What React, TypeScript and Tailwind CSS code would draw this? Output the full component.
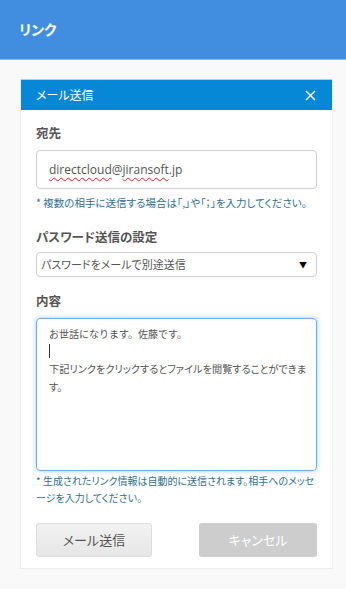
import React from "react";

const jp = "font-['Noto_Sans_CJK_JP','Noto_Sans',sans-serif] [font-feature-settings:'palt']";

export default function App() {
  return (
    <div className={`h-[589px] w-full bg-[#f9f9f9] ${jp}`}>
      <header className="flex h-[60px] items-center border-b border-[#8ebbec] bg-[#418ee0] px-[19px]">
        <h1 className="text-[14px] font-bold text-white">リンク</h1>
      </header>

      <div className="ml-5 mr-[13px] mt-[19px] border border-t-0 border-[#ececec] bg-white">
        <div className="flex h-[31px] items-center justify-between border-t border-[#a9cdea] bg-[#0788d6] pl-[15px] pr-[16px]">
          <span className="text-[12px] text-white">メール送信</span>
          <svg width="11" height="11" viewBox="0 0 11 11" className="text-white">
            <path d="M1 1 L10 10 M10 1 L1 10" stroke="currentColor" strokeWidth="1.4" />
          </svg>
        </div>

        <div className="px-[15px] pb-[11px]">
          <p className="mt-[14px] text-[12.5px] font-bold leading-[18px] text-[#555]">宛先</p>
          <div className="mt-2 flex h-[39px] items-center rounded-[4px] border border-[#cfcfcf] px-3 font-['Open_Sans',sans-serif] text-[12px] text-[#555]">
            <span className="underline decoration-[#e02020] decoration-wavy decoration-1 underline-offset-[3px]">directcloud</span>
            @
            <span className="underline decoration-[#e02020] decoration-wavy decoration-1 underline-offset-[3px]">jiransoft</span>
            .jp
          </div>
          <p className="mt-1.5 text-[10.5px] leading-4 text-[#31708f]">
            * 複数の相手に送信する場合は「,」や「；」を入力してください。
          </p>

          <p className="mt-[17px] text-[12.5px] font-bold leading-[18px] text-[#555]">パスワード送信の設定</p>
          <div className="mt-1.5 flex h-[25px] items-center justify-between rounded-[4px] border border-[#d0d0d0] pl-1 pr-[9px] text-[11px] text-[#555]">
            <span>パスワードをメールで別途送信</span>
            <span className="text-[8px] text-black">▼</span>
          </div>

          <p className="mt-[15px] text-[12.5px] font-bold leading-[18px] text-[#555]">内容</p>
          <div className="mt-2 h-[153px] rounded-[4px] border border-[#66afe9] px-3 pt-[6px] text-[10.2px] leading-[17.5px] text-[#555] shadow-[0_0_5px_rgba(102,175,233,0.6)]">
            <p className="[font-feature-settings:normal] text-[10px]">お世話になります。佐藤です。</p>
            <p className="flex h-[17.5px] items-center">
              <span className="inline-block h-[14px] w-px bg-[#333]" />
            </p>
            <p className="whitespace-nowrap">
              下記リンクをクリックするとファイルを閲覧することができま
              <br />
              す。
            </p>
          </div>
          <p className="mt-px text-[10px] leading-[17px] text-[#31708f]">
            * 生成されたリンク情報は自動的に送信されます。相手へのメッセージを入力してください。
          </p>

          <div className="mt-[17px] flex justify-between">
            <button className="h-[34px] w-[116px] rounded-[3px] border border-[#dcdcdc] bg-gradient-to-b from-[#f2f2f2] to-[#e6e6e6] text-[13px] text-[#555]">
              メール送信
            </button>
            <button className="h-[34px] w-[118px] rounded-[3px] bg-[#cdcdcd] text-[13px] text-white">
              キャンセル
            </button>
          </div>
        </div>
      </div>
    </div>
  );
}
